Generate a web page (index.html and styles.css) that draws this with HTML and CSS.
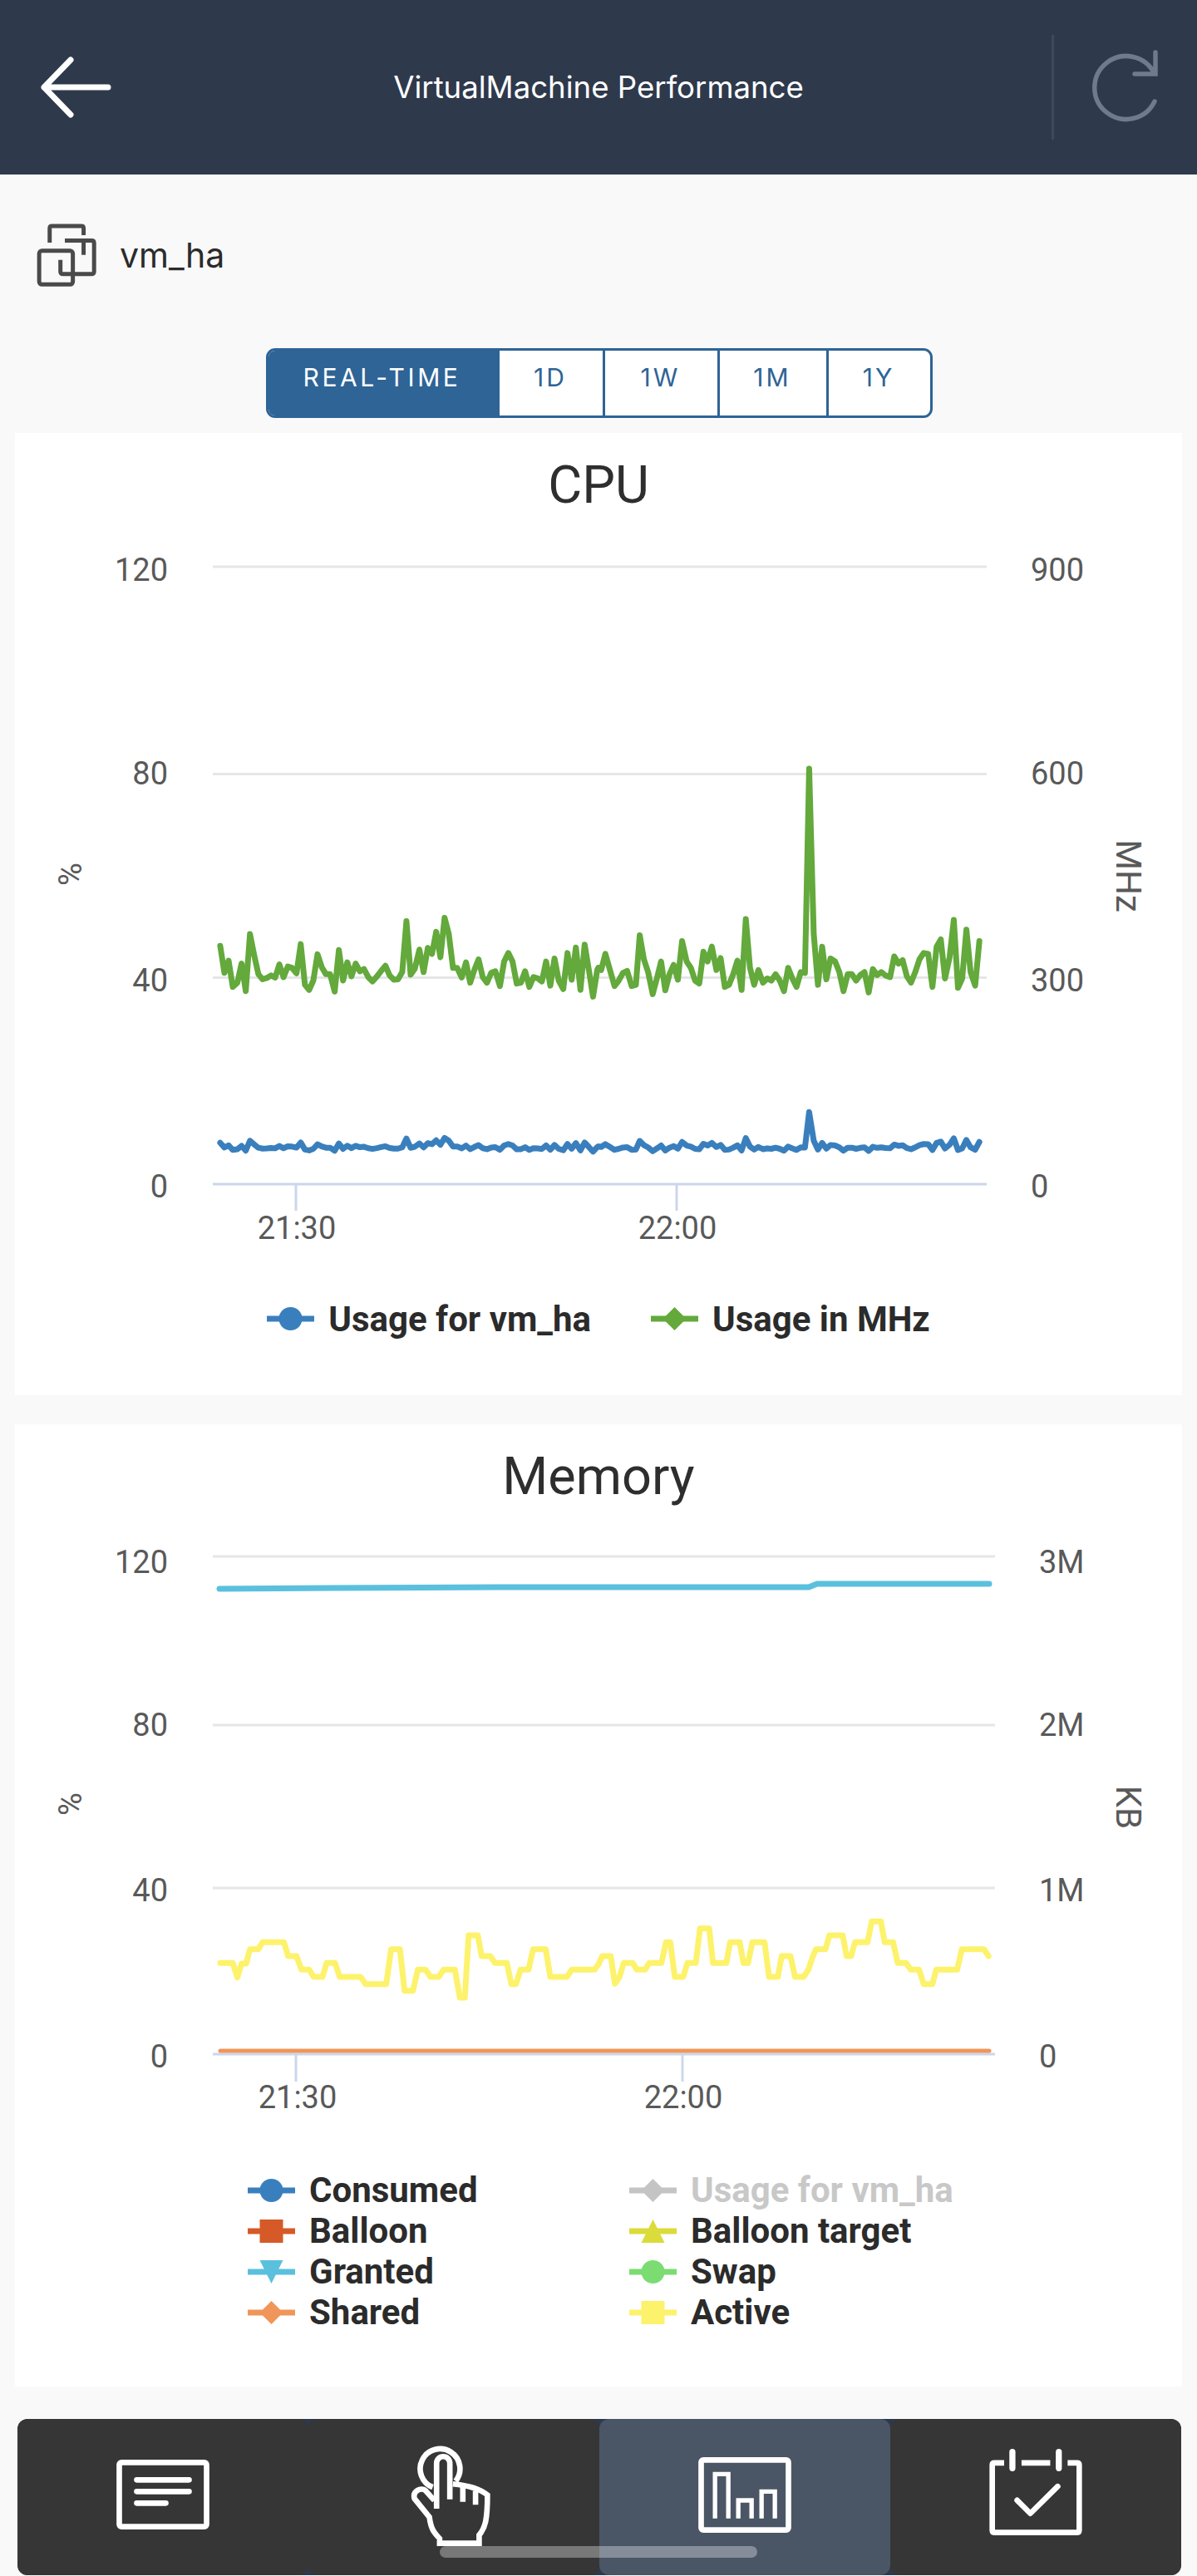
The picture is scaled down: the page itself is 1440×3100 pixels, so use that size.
FILE: index.html
```html
<!DOCTYPE html>
<html lang="en">
<head>
  <meta charset="UTF-8">
  <meta name="viewport" content="width=device-width, initial-scale=1">
  <title>VirtualMachine Performance</title>
  <link rel="stylesheet" href="styles.css">
</head>
<body>

<!-- HEADER -->
<header class="app-header">
  <svg class="back-icon" viewBox="0 0 90 76">
    <path d="M36 5 L4 38 L36 71 M4 38 H81"/>
  </svg>
  <h1 class="app-title">VirtualMachine Performance</h1>
  <div class="refresh">
    <svg class="refresh-icon" viewBox="0 0 90 96">
      <path d="M77 63 A38 38 0 1 1 77 30 M78 4 V30 H53"/>
    </svg>
  </div>
</header>

<!-- VM NAME -->
<div class="vm-row">
  <svg class="vm-icon" viewBox="70 685 225 235">
    <path d="M120 757 V705 Q120 697 128 697 H235 Q243 697 243 705 V730 M175 750 H272 Q281 750 281 759 V862 Q281 871 272 871 H168 Q159 871 159 862 V820 M243 757 V802"/>
    <rect x="82" y="787" width="122" height="122" rx="10"/>
  </svg>
  <span class="vm-name">vm_ha</span>
</div>

<!-- RANGE -->
<div class="range">
  <button class="range-btn active">REAL-TIME</button>
  <button class="range-btn">1D</button>
  <button class="range-btn">1W</button>
  <button class="range-btn">1M</button>
  <button class="range-btn">1Y</button>
</div>

<!-- CPU -->
<section class="card">
  <h2 class="card-title">CPU</h2>
  <svg class="chart chart-cpu" viewBox="18 622 1404 900">
    <defs>
      <g id="cpu-trace">
        <polyline transform="translate(0,880) scale(0.4591,0.5102)" points="577,508 588,572 599,543 610,605 622,595 633,550 644,615 655,480 666,530 677,575 688,587 699,584 710,578 721,583 732,552 743,582 754,557 765,560 777,573 788,504 799,600 810,612 821,590 832,528 843,558 854,575 865,575 877,616 888,518 899,590 910,547 921,580 932,550 943,568 954,563 965,582 976,592 988,580 999,567 1010,555 1021,578 1032,588 1043,587 1054,570 1065,450 1076,576 1087,562 1099,517 1110,570 1121,513 1132,527 1143,475 1154,535 1165,442 1176,480 1187,560 1198,560 1210,583 1221,547 1232,595 1243,565 1254,540 1265,582 1276,595 1287,572 1298,568 1310,603 1321,545 1332,525 1343,545 1354,597 1365,595 1376,568 1387,605 1398,582 1409,585 1420,592 1431,545 1442,602 1453,538 1464,590 1476,610 1487,525 1498,588 1509,512 1521,612 1532,505 1543,565 1554,628 1565,565 1568,560"/>
        <polyline transform="translate(720,880) scale(0.4591,0.5102)" points="0,560 7,565 18,527 30,565 42,603 53,590 64,572 75,567 87,603 98,600 108,483 119,540 130,570 142,622 153,585 164,545 175,613 186,575 197,553 208,588 219,497 231,545 242,560 253,590 264,597 275,522 286,545 297,510 309,565 320,537 331,605 342,600 353,575 364,543 375,612 386,445 397,560 408,600 419,565 431,595 442,585 453,590 464,575 475,590 486,615 497,560 508,585 519,605 530,570 541,572 552,90 564,480 575,600 586,510 597,587 608,538 620,545 631,570 642,615 653,575 664,575 675,590 686,577 697,570 708,618 719,563 730,577 741,570 752,578 764,582 775,533 786,550 797,542 808,580 819,595 830,570 841,540 852,525 864,527 875,605 886,510 897,493 908,585 920,535 931,447 942,607 953,585 964,470 975,570 987,602 998,497"/>
      </g>
    </defs>

    <line class="grid" x1="256" x2="1187" y1="683" y2="683"/>
    <line class="grid" x1="256" x2="1187" y1="932.5" y2="932.5"/>
    <line class="grid" x1="256" x2="1187" y1="1177.5" y2="1177.5"/>
    <line class="axis" x1="256" x2="1187" y1="1426" y2="1426"/>
    <line class="axis" x1="356" x2="356" y1="1426" y2="1458"/>
    <line class="axis" x1="814" x2="814" y1="1426" y2="1458"/>

    <text class="label end" x="202" y="700">120</text>
    <text class="label end" x="202" y="945">80</text>
    <text class="label end" x="202" y="1194">40</text>
    <text class="label end" x="202" y="1442">0</text>
    <text class="label" x="1240" y="700">900</text>
    <text class="label" x="1240" y="945">600</text>
    <text class="label" x="1240" y="1194">300</text>
    <text class="label" x="1240" y="1442">0</text>
    <text class="label mid" x="357" y="1492">21:30</text>
    <text class="label mid" x="815" y="1492">22:00</text>
    <text class="label mid" transform="translate(98,1053) rotate(-90)">%</text>
    <text class="label mid unit" transform="translate(1343,1055) rotate(90)">MHz</text>

    <use class="trace trace-blue" href="#cpu-trace" transform="translate(0,1426) scale(1,0.1735) translate(0,-1426)"/>
    <use class="trace trace-green" href="#cpu-trace"/>
  </svg>

  <div class="legend legend-cpu">
    <div class="legend-item">
      <svg class="marker" viewBox="0 0 57 30"><rect class="fill-blue" y="11.5" width="57" height="7"/><circle class="fill-blue" cx="28.5" cy="15" r="14"/></svg>
      Usage for vm_ha
    </div>
    <div class="legend-item">
      <svg class="marker" viewBox="0 0 57 30"><rect class="fill-green" y="11.5" width="57" height="7"/><path class="fill-green" d="M28.5 1 L42.5 15 L28.5 29 L14.5 15 Z"/></svg>
      Usage in MHz
    </div>
  </div>
</section>

<!-- MEMORY -->
<section class="card card-memory">
  <h2 class="card-title">Memory</h2>
  <svg class="chart chart-memory" viewBox="18 1815 1404 745">
    <defs>
      <g id="memory-trace">
        <polyline transform="translate(0,2250) scale(0.4591,0.3333)" points="577,340 610,340 622,392 633,342 645,342 655,290 677,290 688,265 744,265 755,315 777,315 790,364 810,364 822,390 845,390 856,340 878,340 890,390 945,390 958,416 1012,416 1025,290 1048,290 1060,440 1082,440 1095,364 1115,364 1128,390 1150,390 1162,364 1192,364 1205,465 1218,465 1228,240 1252,240 1262,315 1285,315 1297,340 1328,340 1340,416 1352,416 1364,364 1385,364 1397,290 1430,290 1442,390 1486,390 1498,364 1558,364 1568,345"/>
        <polyline transform="translate(720,2250) scale(0.4591,0.3333)" points="0,345 10,315 32,315 43,415 55,390 66,340 90,340 100,364 122,364 133,340 165,340 177,265 188,265 200,390 222,390 233,340 255,340 266,215 290,215 300,340 335,340 345,265 370,265 380,340 392,340 403,265 435,265 447,390 470,390 480,315 503,315 515,390 538,390 550,364 562,315 570,290 595,290 605,240 640,240 650,315 662,315 672,265 705,265 716,190 740,190 750,265 772,265 784,340 806,340 818,364 840,364 852,416 875,416 885,364 940,364 952,290 1010,290 1022,315"/>
      </g>
    </defs>

    <line class="grid" x1="256" x2="1197" y1="1874" y2="1874"/>
    <line class="grid" x1="256" x2="1197" y1="2077" y2="2077"/>
    <line class="grid" x1="256" x2="1197" y1="2273" y2="2273"/>
    <line class="axis" x1="256" x2="1197" y1="2473" y2="2473"/>
    <line class="axis" x1="356" x2="356" y1="2473" y2="2506"/>
    <line class="axis" x1="821" x2="821" y1="2473" y2="2506"/>

    <text class="label end" x="202" y="1894">120</text>
    <text class="label end" x="202" y="2090">80</text>
    <text class="label end" x="202" y="2289">40</text>
    <text class="label end" x="202" y="2489">0</text>
    <text class="label" x="1250" y="1894">3M</text>
    <text class="label" x="1250" y="2090">2M</text>
    <text class="label" x="1250" y="2289">1M</text>
    <text class="label" x="1250" y="2489">0</text>
    <text class="label mid" x="358" y="2538">21:30</text>
    <text class="label mid" x="822" y="2538">22:00</text>
    <text class="label mid" transform="translate(98,2172) rotate(-90)">%</text>
    <text class="label mid unit" transform="translate(1343,2176) rotate(90)">KB</text>

    <polyline class="trace trace-cyan" points="264,1913 400,1912 600,1911 973,1911 983,1907 1190,1907"/>
    <use class="trace trace-yellow" href="#memory-trace"/>
    <polyline class="trace trace-orange" points="265,2469 1190,2469"/>
  </svg>

  <div class="legend legend-memory">
    <div class="legend-item">
      <svg class="marker" viewBox="0 0 57 30"><rect class="fill-blue" y="11.5" width="57" height="7"/><circle class="fill-blue" cx="28.5" cy="15" r="14"/></svg>
      Consumed
    </div>
    <div class="legend-item hidden-series">
      <svg class="marker" viewBox="0 0 57 30"><rect class="fill-grey" y="11.5" width="57" height="7"/><path class="fill-grey" d="M28.5 1 L42.5 15 L28.5 29 L14.5 15 Z"/></svg>
      Usage for vm_ha
    </div>
    <div class="legend-item">
      <svg class="marker" viewBox="0 0 57 30"><rect class="fill-red" y="11.5" width="57" height="7"/><rect class="fill-red" x="14.5" y="1" width="28" height="28"/></svg>
      Balloon
    </div>
    <div class="legend-item">
      <svg class="marker" viewBox="0 0 57 30"><rect class="fill-olive" y="11.5" width="57" height="7"/><path class="fill-olive" d="M28.5 1 L42.5 29 H14.5 Z"/></svg>
      Balloon target
    </div>
    <div class="legend-item">
      <svg class="marker" viewBox="0 0 57 30"><rect class="fill-cyan" y="11.5" width="57" height="7"/><path class="fill-cyan" d="M14.5 1 H42.5 L28.5 29 Z"/></svg>
      Granted
    </div>
    <div class="legend-item">
      <svg class="marker" viewBox="0 0 57 30"><rect class="fill-lime" y="11.5" width="57" height="7"/><circle class="fill-lime" cx="28.5" cy="15" r="14"/></svg>
      Swap
    </div>
    <div class="legend-item">
      <svg class="marker" viewBox="0 0 57 30"><rect class="fill-orange" y="11.5" width="57" height="7"/><path class="fill-orange" d="M28.5 1 L42.5 15 L28.5 29 L14.5 15 Z"/></svg>
      Shared
    </div>
    <div class="legend-item">
      <svg class="marker" viewBox="0 0 57 30"><rect class="fill-yellow" y="11.5" width="57" height="7"/><rect class="fill-yellow" x="14.5" y="1" width="28" height="28"/></svg>
      Active
    </div>
  </div>
</section>

<!-- BOTTOM TABS -->
<nav class="tabs">
  <div class="tab">
    <svg class="tab-icon icon-doc" viewBox="120 93 335 252">
      <rect x="130" y="103" width="315" height="232" rx="8"/>
      <path class="round" d="M193 166 H382 M193 208 H382 M193 250 H298"/>
    </svg>
  </div>
  <div class="tab">
    <svg class="tab-icon icon-hand" viewBox="1183 35 287 370">
      <path d="M1262 192 A72 72 0 1 1 1345 170"/>
      <path d="M1276 270 V105 A24 24 0 0 1 1324 105 V236"/>
      <path d="M1268 240 L1237 205 C1220 190 1188 205 1196 233 L1250 300 C1255 340 1265 355 1287 378 V395 H1430 V365 C1452 340 1460 310 1460 220 C1430 195 1390 185 1335 180"/>
      <path d="M1371 190 V245 M1417 205 V255"/>
    </svg>
  </div>
  <div class="tab active">
    <svg class="tab-icon icon-chart" viewBox="60 82 335 273">
      <rect x="70" y="92" width="315" height="253" rx="8"/>
      <path class="thin" d="M120 303 V143 H168 V303 M204 303 V238 H252 V303 M288 303 V206 H336 V303"/>
    </svg>
  </div>
  <div class="tab">
    <svg class="tab-icon icon-calendar" viewBox="1110 52 335 313">
      <path d="M1163 103 H1128 Q1120 103 1120 111 V347 Q1120 355 1128 355 H1427 Q1435 355 1435 347 V111 Q1435 103 1427 103 H1393 M1226 103 H1330"/>
      <path class="round thick" d="M1193 63 V122 M1361 63 V122"/>
      <path class="round" d="M1210 238 L1258 286 L1357 188"/>
    </svg>
  </div>
  <div class="home-bar"></div>
</nav>

</body>
</html>
```

FILE: styles.css
```css
html, body {
  margin: 0;
  padding: 0;
}

body {
  width: 1440px;
  height: 3100px;
  overflow: hidden;
  background: #f9f9f9;
  font-family: Roboto, Arial, sans-serif;
}

/* Header */
.app-header {
  position: relative;
  display: flex;
  align-items: center;
  justify-content: center;
  height: 210px;
  background: #2e394c;
}

.back-icon {
  position: absolute;
  left: 49px;
  top: 67px;
  width: 90px;
  height: 76px;
  fill: none;
  stroke: #fff;
  stroke-width: 7;
  stroke-linecap: round;
  stroke-linejoin: round;
}

.app-title {
  margin: 0;
  color: #fff;
  font-family: Inter, sans-serif;
  font-size: 36.6px;
  font-weight: 400;
}

.refresh {
  position: absolute;
  right: 0;
  top: 42px;
  display: flex;
  align-items: center;
  width: 175px;
  height: 126px;
  box-sizing: border-box;
  border-left: 3px solid #3d495c;
  padding: 4px 0 0 44px;
}

.refresh-icon {
  width: 90px;
  height: 96px;
  fill: none;
  stroke: #6f7a8b;
  stroke-width: 5.5;
  stroke-linecap: round;
}

/* VM name row */
.vm-row {
  display: flex;
  align-items: center;
  gap: 26px;
  padding: 58px 0 0 43px;
}

.vm-icon {
  width: 75px;
  height: 78px;
  fill: none;
  stroke: #4a4a4a;
  stroke-width: 15;
}

.vm-name {
  color: #2b2b2b;
  font-family: Inter, sans-serif;
  font-size: 41px;
}

/* Range buttons */
.range {
  display: grid;
  grid-template-columns: 275px 127px 138px 131px 125px;
  width: 802px;
  height: 84px;
  box-sizing: border-box;
  margin: 73px 0 0 320px;
  border: 3px solid #2e6496;
  border-radius: 11px;
  overflow: hidden;
  background: #fff;
}

.range-btn {
  padding: 0 2px 14px 0;
  border: 0;
  border-left: 3px solid #2e6496;
  background: transparent;
  color: #2e6496;
  font-family: Inter, sans-serif;
  font-size: 30px;
  font-weight: 400;
  letter-spacing: 3px;
}

.range-btn.active {
  border-left: 0;
  background: #2e6496;
  color: #fff;
  letter-spacing: 3.6px;
}

/* Chart cards */
.card {
  width: 1404px;
  height: 1158px;
  box-sizing: border-box;
  margin: 18px 0 0 18px;
  padding-top: 28px;
  background: #fff;
}

.card-memory {
  margin-top: 35px;
}

.card-title {
  margin: 0;
  color: #2e2e2e;
  font-size: 63px;
  font-weight: 400;
  line-height: 70px;
  text-align: center;
}

.chart {
  display: block;
  width: 1404px;
  margin-top: 2px;
}

.chart-cpu {
  height: 900px;
}

.chart-memory {
  height: 745px;
}

.grid {
  stroke: #e6e6e6;
  stroke-width: 3;
}

.axis {
  stroke: #ccd6eb;
  stroke-width: 3;
}

.label {
  fill: #595959;
  font-family: Roboto, sans-serif;
  font-size: 38px;
}

.label.end {
  text-anchor: end;
}

.label.mid {
  text-anchor: middle;
}

.label.unit {
  font-size: 42px;
}

.trace {
  fill: none;
  stroke-width: 7;
  stroke-linecap: round;
  stroke-linejoin: round;
}

#cpu-trace polyline,
#memory-trace polyline {
  vector-effect: non-scaling-stroke;
}

.trace-blue { stroke: #3a7fbd; }
.trace-green { stroke: #63a93c; }
.trace-cyan { stroke: #5bc0de; }
.trace-yellow { stroke: #fdf26c; }
.trace-orange { stroke: #f0965a; stroke-width: 5; }

/* Legends */
.legend-item {
  display: flex;
  align-items: center;
  gap: 17px;
  color: #2b2b2b;
  font-size: 42px;
  font-weight: 700;
  white-space: nowrap;
}

.marker {
  flex: none;
  width: 57px;
  height: 30px;
}

.legend-cpu {
  display: flex;
  justify-content: center;
  gap: 72px;
  height: 50px;
  margin-top: 41px;
}

.legend-memory {
  display: grid;
  grid-template-columns: 459px 459px;
  grid-auto-rows: 49px;
  margin-top: 52px;
  padding-left: 280px;
}

.hidden-series {
  color: #c8c8c8;
}

.fill-blue { fill: #3a7fbd; }
.fill-green { fill: #63a93c; }
.fill-red { fill: #d65a28; }
.fill-olive { fill: #dbdb3a; }
.fill-cyan { fill: #5bc0de; }
.fill-lime { fill: #7bdc72; }
.fill-orange { fill: #f0965a; }
.fill-yellow { fill: #fdf26c; }
.fill-grey { fill: #c4c4c4; }

/* Bottom tabs */
.tabs {
  position: relative;
  display: grid;
  grid-template-columns: repeat(4, 1fr);
  width: 1400px;
  height: 188px;
  margin: 39px 0 0 21px;
  border-radius: 12px;
  overflow: hidden;
  background: #2e394c;
}

.tab {
  display: flex;
  align-items: center;
  justify-content: center;
  padding-bottom: 6px;
  border-radius: 12px;
  background: #363636;
}

.tab.active {
  background: #4a5666;
}

.tab-icon {
  fill: none;
  stroke: #fff;
  stroke-width: 20;
}

.tab-icon .round {
  stroke-linecap: round;
  stroke-linejoin: round;
}

.tab-icon .thick {
  stroke-width: 22;
}

.tab-icon .thin {
  stroke-width: 16;
}

.icon-doc {
  width: 112px;
  height: 84px;
}

.icon-hand {
  width: 96px;
  height: 123px;
  margin-left: -8px;
}

.icon-chart {
  width: 112px;
  height: 91px;
}

.icon-calendar {
  width: 112px;
  height: 104px;
  margin-bottom: 7px;
}

.home-bar {
  position: absolute;
  left: 508px;
  bottom: 21px;
  width: 382px;
  height: 14px;
  border-radius: 7px;
  background: rgba(255, 255, 255, 0.33);
}
```
